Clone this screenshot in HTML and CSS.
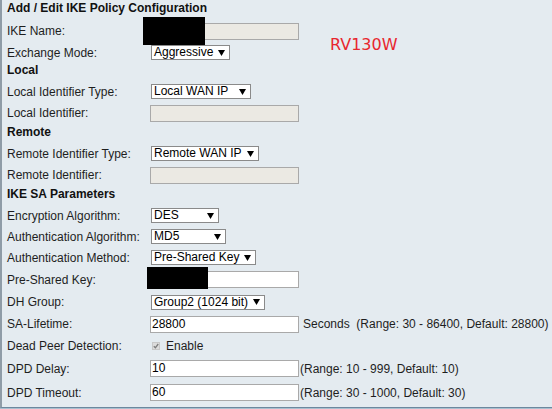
FILE: index.html
```html
<!DOCTYPE html>
<html>
<head>
<meta charset="utf-8">
<link rel="stylesheet" href="styles.css">
</head>
<body>
<div class="page">
  <div class="panel">
    <div class="title">Add / Edit IKE Policy Configuration</div>

    <div class="label">IKE Name:</div>
    <div class="ctl"><span class="input disabled"></span></div>

    <div class="label">Exchange Mode:</div>
    <div class="ctl"><span class="select w-78"><span class="val">Aggressive</span><svg class="arr" width="7" height="6" viewBox="0 0 7 6"><polygon points="0,0 7,0 3.5,6"/></svg></span></div>

    <div class="head">Local</div>

    <div class="label">Local Identifier Type:</div>
    <div class="ctl"><span class="select w-99"><span class="val">Local WAN IP</span><svg class="arr" width="7" height="6" viewBox="0 0 7 6"><polygon points="0,0 7,0 3.5,6"/></svg></span></div>

    <div class="label">Local Identifier:</div>
    <div class="ctl"><span class="input disabled"></span></div>

    <div class="head">Remote</div>

    <div class="label">Remote Identifier Type:</div>
    <div class="ctl"><span class="select w-107"><span class="val">Remote WAN IP</span><svg class="arr" width="7" height="6" viewBox="0 0 7 6"><polygon points="0,0 7,0 3.5,6"/></svg></span></div>

    <div class="label">Remote Identifier:</div>
    <div class="ctl"><span class="input disabled"></span></div>

    <div class="head">IKE SA Parameters</div>

    <div class="label">Encryption Algorithm:</div>
    <div class="ctl"><span class="select w-67"><span class="val">DES</span><svg class="arr" width="7" height="6" viewBox="0 0 7 6"><polygon points="0,0 7,0 3.5,6"/></svg></span></div>

    <div class="label">Authentication Algorithm:</div>
    <div class="ctl"><span class="select w-74"><span class="val">MD5</span><svg class="arr" width="7" height="6" viewBox="0 0 7 6"><polygon points="0,0 7,0 3.5,6"/></svg></span></div>

    <div class="label">Authentication Method:</div>
    <div class="ctl"><span class="select w-104"><span class="val">Pre-Shared Key</span><svg class="arr" width="7" height="6" viewBox="0 0 7 6"><polygon points="0,0 7,0 3.5,6"/></svg></span></div>

    <div class="label">Pre-Shared Key:</div>
    <div class="ctl"><span class="input"></span></div>

    <div class="label">DH Group:</div>
    <div class="ctl"><span class="select w-113"><span class="val">Group2 (1024 bit)</span><svg class="arr" width="7" height="6" viewBox="0 0 7 6"><polygon points="0,0 7,0 3.5,6"/></svg></span></div>

    <div class="label">SA-Lifetime:</div>
    <div class="ctl"><span class="input">28800</span><span class="note spaced">Seconds&nbsp; (Range: 30 - 86400, Default: 28800)</span></div>

    <div class="label">Dead Peer Detection:</div>
    <div class="ctl"><span class="chk"><svg width="6" height="6" viewBox="0 0 6 6"><polyline points="0.8,3.2 2.4,4.8 5.2,1" fill="none" stroke="#7d7d7d" stroke-width="1.3"/></svg></span><span class="note chk-label">Enable</span></div>

    <div class="label">DPD Delay:</div>
    <div class="ctl"><span class="input">10</span><span class="note">(Range: 10 - 999, Default: 10)</span></div>

    <div class="label">DPD Timeout:</div>
    <div class="ctl"><span class="input">60</span><span class="note">(Range: 30 - 1000, Default: 30)</span></div>
  </div>

  <div class="model">RV130W</div>
  <div class="redact redact-name"></div>
  <div class="redact redact-psk"></div>
</div>
</body>
</html>
```

FILE: styles.css
```css
html, body {
  margin: 0;
  padding: 0;
}

body {
  background: #a9bfcf;
  font-family: "Liberation Sans", Arial, sans-serif;
  font-size: 12px;
  color: #1e1e1e;
}

.page {
  position: relative;
  width: 552px;
  height: 409px;
  overflow: hidden;
}

.panel {
  display: grid;
  grid-template-columns: 143px 1fr;
  grid-template-rows: 20px 22px 21px 18px 21px 22px 19px 21px 22px 19px 21px 21px 21px 23px 22px 22px 22px 23px 25px;
  padding: 0 0 2px 5px;
  background: #e4ebf0;
  border-left: 2px solid #8f9ca7;
  border-bottom: 1px solid #6c889e;
}

.title {
  grid-column: 1 / -1;
  align-self: start;
  margin-top: 1px;
  line-height: 14px;
  font-weight: bold;
  color: #111;
}

.head {
  grid-column: 1 / -1;
  align-self: end;
  padding-bottom: 3px;
  line-height: 15px;
  font-weight: bold;
  color: #111;
}

.label {
  align-self: center;
  line-height: 14px;
  white-space: nowrap;
}

.ctl {
  display: flex;
  align-items: center;
  white-space: nowrap;
}

.input {
  box-sizing: border-box;
  display: block;
  width: 149px;
  height: 17px;
  border: 1px solid #a9a9a9;
  background: #fff;
  padding: 0 0 0 1px;
  line-height: 15px;
  color: #000;
}

.input.disabled {
  background: #ebe9e3;
}

.select {
  box-sizing: border-box;
  display: flex;
  align-items: center;
  justify-content: space-between;
  height: 15px;
  margin-left: 1px;
  padding: 0 4px 0 2px;
  border: 1px solid #8a8a8a;
  background: #fff;
  color: #000;
  line-height: 13px;
}

.select .arr {
  display: block;
  flex: none;
  fill: #000;
}

.w-67 { width: 68px; }
.w-74 { width: 75px; }
.w-78 { width: 79px; }
.w-99 { width: 100px; }
.w-104 { width: 105px; }
.w-107 { width: 108px; }
.w-113 { width: 114px; }

.note {
  line-height: 14px;
  margin-left: 1px;
}

.note.spaced {
  margin-left: 4px;
}

.chk {
  box-sizing: border-box;
  display: flex;
  align-items: center;
  justify-content: center;
  width: 8px;
  height: 8px;
  margin-left: 2px;
  background: #dcdcdc;
  border: 1px solid #c8c8c8;
}

.chk svg {
  display: block;
}

.note.chk-label {
  margin-left: 6px;
}

.model {
  position: absolute;
  left: 330px;
  top: 36px;
  font-family: "DejaVu Sans", sans-serif;
  font-size: 16px;
  line-height: 18px;
  color: #e8262e;
}

.redact {
  position: absolute;
  background: #000;
}

.redact-name {
  left: 143px;
  top: 17px;
  width: 62px;
  height: 28px;
}

.redact-psk {
  left: 147px;
  top: 267px;
  width: 61px;
  height: 22px;
}
```
